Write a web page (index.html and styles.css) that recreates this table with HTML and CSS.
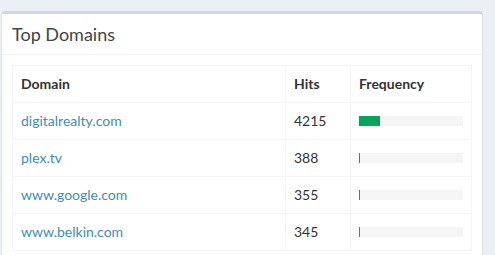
FILE: index.html
```html
<!DOCTYPE html>
<html>
<head>
<meta charset="utf-8">
<link rel="stylesheet" href="styles.css">
</head>
<body>
<div class="box">
  <div class="box-header"><h3 class="box-title">Top Domains</h3></div>
  <div class="box-body">
    <table class="table">
      <thead>
        <tr><th class="c-domain">Domain</th><th class="c-hits">Hits</th><th class="c-freq">Frequency</th></tr>
      </thead>
      <tbody>
        <tr><td><a href="#">digitalrealty.com</a></td><td>4215</td><td><div class="progress"><div class="bar" style="width:20.5%"></div></div></td></tr>
        <tr><td><a href="#">plex.tv</a></td><td>388</td><td><div class="progress"><div class="bar" style="width:1%"></div></div></td></tr>
        <tr><td><a href="#">www.google.com</a></td><td>355</td><td><div class="progress"><div class="bar" style="width:1%"></div></div></td></tr>
        <tr><td><a href="#">www.belkin.com</a></td><td>345</td><td><div class="progress"><div class="bar" style="width:1%"></div></div></td></tr>
      </tbody>
    </table>
  </div>
</div>
</body>
</html>
```
FILE: styles.css
```css
html, body {
  margin: 0;
  padding: 0;
  background: #ecf0f5;
  font-family: Lato, "Open Sans", sans-serif;
  font-size: 14px;
  color: #333;
  overflow: hidden;
  height: 255px;
}
.box {
  margin: 11px 0 0 2px;
  width: 480px;
  background: #fff;
  border-top: 3px solid #d2d6de;
  border-radius: 3px;
  box-shadow: 0 1px 1px rgba(0,0,0,0.1), 1px 0 1px rgba(0,0,0,0.06), -1px 0 1px rgba(0,0,0,0.04);
}
.box-header {
  padding: 10px;
  border-bottom: 1px solid #f4f4f4;
}
.box-title {
  margin: 0;
  font-size: 18px;
  font-weight: 400;
  line-height: 20px;
  color: #444;
}
.box-body {
  padding: 10px;
}
.table {
  width: 100%;
  border-collapse: collapse;
  border: 1px solid #f4f4f4;
}
.table th, .table td {
  border: 1px solid #f4f4f4;
  padding: 8px;
  line-height: 20px;
  text-align: left;
  vertical-align: middle;
}
.table th {
  font-weight: 700;
}
.c-domain { width: 256px; }
.c-hits { width: 48px; }
a {
  color: #3c8dbc;
  text-decoration: none;
}
.progress {
  height: 10px;
  background: #f5f5f5;
  overflow: hidden;
}
.bar {
  height: 100%;
  background: #00a65a;
}
```
